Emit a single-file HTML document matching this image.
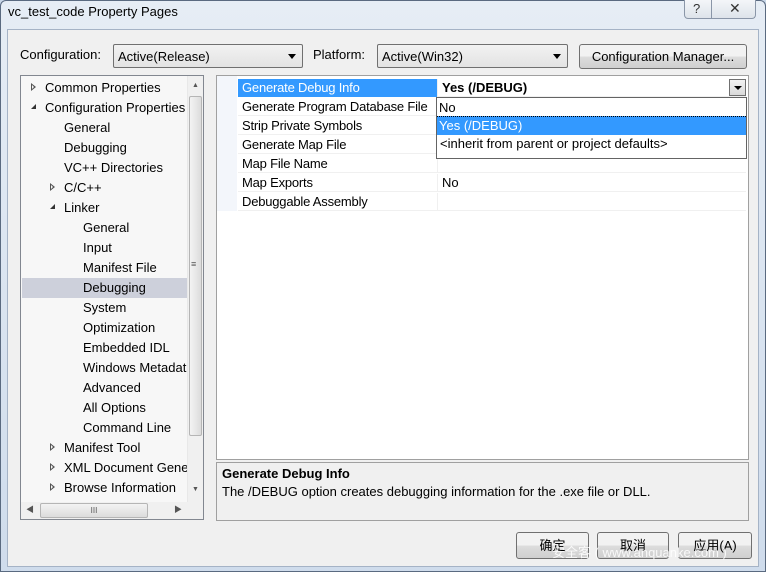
<!DOCTYPE html>
<html><head><meta charset="utf-8"><style>
*{margin:0;padding:0;box-sizing:border-box}
body{width:766px;height:572px;overflow:hidden;background:#c9d7e8;font-family:"Liberation Sans","Noto Sans CJK SC",sans-serif;font-size:13px;color:#000;position:relative}
.a{position:absolute;white-space:nowrap}
.combo{position:absolute;height:24px;border:1px solid #707070;border-radius:2px;background:linear-gradient(#f2f2f2,#e3e3e3);padding:4px 4px;overflow:hidden}
.combo:after{content:"";position:absolute;right:6px;top:9px;border-left:4px solid transparent;border-right:4px solid transparent;border-top:5px solid #000}
.btn{position:absolute;border:1px solid #707070;border-radius:3px;background:linear-gradient(#f2f2f2 50%,#dddddd 50%,#cfcfcf);text-align:center}
.t{position:absolute;height:20px;line-height:20px;white-space:nowrap}
.row{position:absolute;left:22px;width:508px;height:19px;border-bottom:1px solid #f0f0f0}
.row .n{position:absolute;left:0;top:1px;width:199px;height:18px;line-height:18px;padding-left:4px;overflow:hidden;white-space:nowrap;letter-spacing:-0.2px}
.row .v{position:absolute;left:199px;top:1px;right:0;height:18px;line-height:18px;padding-left:4px;border-left:1px solid #f0f0f0}
.ar{position:absolute;border-top:4px solid transparent;border-bottom:4px solid transparent;border-left:5px solid #555}
.ar:after{content:"";position:absolute;left:-4px;top:-2px;border-top:2px solid transparent;border-bottom:2px solid transparent;border-left:2px solid #f7f7f7}
</style></head><body>
<div class="a" style="left:0;top:0;width:766px;height:572px;background:linear-gradient(#e6edf5,#cfdcec);border:1px solid #5a6a80;border-radius:6px 6px 0 0"></div>
<div class="a" style="left:8px;top:4px;font-size:13px">vc_test_code Property Pages</div>
<div class="a" style="left:684px;top:0;width:72px;height:19px;border:1px solid #8a96a8;border-top:none;border-radius:0 0 4px 4px;background:linear-gradient(#f4f6f9,#dde3ea)"></div>
<div class="a" style="left:711px;top:0;width:1px;height:19px;background:#8a96a8"></div>
<div class="a" style="left:693px;top:1px;font-size:13px;color:#333">?</div>
<div class="a" style="left:729px;top:0px;font-size:14px;color:#333">✕</div>
<div class="a" style="left:7px;top:29px;width:752px;height:538px;background:#f0f0f0;border:1px solid #a5b3c6"></div>

<div class="a" style="left:20px;top:47px">Configuration:</div>
<div class="combo" style="left:113px;top:44px;width:190px">Active(Release)</div>
<div class="a" style="left:313px;top:47px">Platform:</div>
<div class="combo" style="left:377px;top:44px;width:191px">Active(Win32)</div>
<div class="btn" style="left:579px;top:44px;width:168px;height:25px;line-height:23px">Configuration Manager...</div>

<div class="a" style="left:20px;top:75px;width:184px;height:445px;background:#f7f7f7;border:1px solid #828790;overflow:hidden">
<div class="a" style="left:1px;top:202px;width:165px;height:20px;background:#cdd0db"></div>
<div class="t" style="left:24px;top:2px">Common Properties</div>
<div class="t" style="left:24px;top:22px">Configuration Properties</div>
<div class="t" style="left:43px;top:42px">General</div>
<div class="t" style="left:43px;top:62px">Debugging</div>
<div class="t" style="left:43px;top:82px">VC++ Directories</div>
<div class="t" style="left:43px;top:102px">C/C++</div>
<div class="t" style="left:43px;top:122px">Linker</div>
<div class="t" style="left:62px;top:142px">General</div>
<div class="t" style="left:62px;top:162px">Input</div>
<div class="t" style="left:62px;top:182px">Manifest File</div>
<div class="t" style="left:62px;top:202px">Debugging</div>
<div class="t" style="left:62px;top:222px">System</div>
<div class="t" style="left:62px;top:242px">Optimization</div>
<div class="t" style="left:62px;top:262px">Embedded IDL</div>
<div class="t" style="left:62px;top:282px">Windows Metadata</div>
<div class="t" style="left:62px;top:302px">Advanced</div>
<div class="t" style="left:62px;top:322px">All Options</div>
<div class="t" style="left:62px;top:342px">Command Line</div>
<div class="t" style="left:43px;top:362px">Manifest Tool</div>
<div class="t" style="left:43px;top:382px">XML Document Generator</div>
<div class="t" style="left:43px;top:402px">Browse Information</div>
<div class="a" style="left:166px;top:0;width:17px;height:426px;background:#f0f0f0;border-left:1px solid #e8e8e8"></div>
<div class="a" style="left:168px;top:20px;width:13px;height:340px;background:linear-gradient(90deg,#f3f3f3,#dcdcdc);border:1px solid #b5b5b5;border-radius:2px"></div>
<div class="a" style="left:170px;top:183px;font-size:9px;color:#555">≡</div>
<div class="a" style="left:171px;top:6px;font-size:7px;color:#555">▲</div>
<div class="a" style="left:171px;top:410px;font-size:7px;color:#555">▼</div>
<div class="a" style="left:0;top:426px;width:183px;height:17px;background:#f0f0f0"></div>
<div class="a" style="left:19px;top:427px;width:108px;height:15px;background:linear-gradient(#f3f3f3,#dcdcdc);border:1px solid #b5b5b5;border-radius:2px;text-align:center;font-size:8px;line-height:13px;color:#555">III</div>
<div class="a" style="left:5px;top:428px;font-size:8px;color:#555">◀</div>
<div class="a" style="left:153px;top:428px;font-size:8px;color:#555">▶</div>
</div>
<div class="ar" style="left:31px;top:83px"></div>
<div class="a" style="left:31px;top:104px;border-left:5px solid transparent;border-bottom:5px solid #333"></div>
<div class="ar" style="left:50px;top:183px"></div>
<div class="a" style="left:50px;top:204px;border-left:5px solid transparent;border-bottom:5px solid #333"></div>
<div class="ar" style="left:50px;top:443px"></div>
<div class="ar" style="left:50px;top:463px"></div>
<div class="ar" style="left:50px;top:483px"></div>

<div class="a" style="left:216px;top:75px;width:533px;height:385px;background:#fff;border:1px solid #a0a0a0"></div>
<div class="a" style="left:217px;top:76px;width:20px;height:135px;background:#f3f6fb"></div>
<div class="a" style="left:216px;top:76px;width:533px">
<div class="row" style="top:2px"><div class="n" style="background:#3399ff;color:#fff">Generate Debug Info</div><div class="v" style="font-weight:bold">Yes (/DEBUG)</div></div>
<div class="row" style="top:21px"><div class="n">Generate Program Database File</div><div class="v"></div></div>
<div class="row" style="top:40px"><div class="n">Strip Private Symbols</div><div class="v"></div></div>
<div class="row" style="top:59px"><div class="n">Generate Map File</div><div class="v"></div></div>
<div class="row" style="top:78px"><div class="n">Map File Name</div><div class="v"></div></div>
<div class="row" style="top:97px"><div class="n">Map Exports</div><div class="v">No</div></div>
<div class="row" style="top:116px"><div class="n">Debuggable Assembly</div><div class="v"></div></div>
</div>
<div class="a" style="left:729px;top:79px;width:17px;height:17px;border:1px solid #707070;background:linear-gradient(#f2f2f2,#dadada)"></div>
<div class="a" style="left:734px;top:86px;border-left:4px solid transparent;border-right:4px solid transparent;border-top:4px solid #000"></div>
<div class="a" style="left:436px;top:97px;width:311px;height:62px;background:#fff;border:1px solid #646464">
<div class="a" style="left:2px;top:1px;line-height:18px">No</div>
<div class="a" style="left:0;top:18px;width:309px;height:19px;background:#3399ff;border-top:1px dotted #000;color:#fff;line-height:18px;padding-left:2px">Yes (/DEBUG)</div>
<div class="a" style="left:3px;top:37px;line-height:18px">&lt;inherit from parent or project defaults&gt;</div>
</div>

<div class="a" style="left:216px;top:462px;width:533px;height:59px;background:#f0f0f0;border:1px solid #a0a0a0"></div>
<div class="a" style="left:222px;top:466px;font-weight:bold">Generate Debug Info</div>
<div class="a" style="left:222px;top:484px">The /DEBUG option creates debugging information for the .exe file or DLL.</div>

<div class="btn" style="left:516px;top:532px;width:73px;height:27px;line-height:25px">确定</div>
<div class="btn" style="left:597px;top:532px;width:72px;height:27px;line-height:25px">取消</div>
<div class="btn" style="left:678px;top:532px;width:74px;height:27px;line-height:25px">应用(A)</div>
<div class="a" style="left:552px;top:542px;color:rgba(255,255,255,0.85);font-size:13px">安全客 ( www.anquanke.com )</div>
</body></html>
